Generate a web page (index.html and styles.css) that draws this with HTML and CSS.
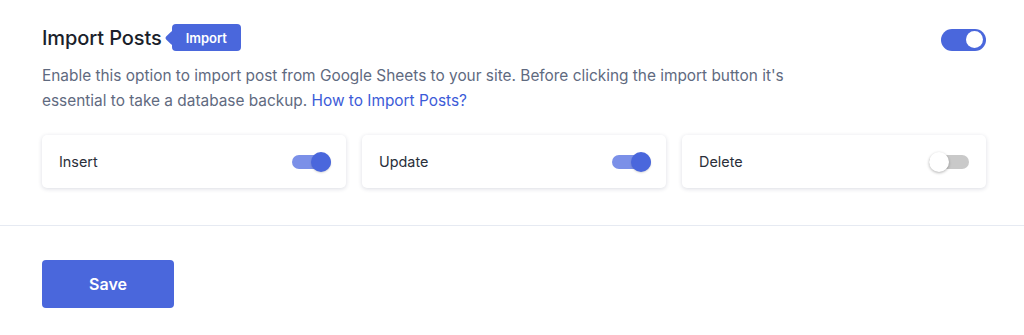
FILE: index.html
```html
<!DOCTYPE html>
<html>
<head>
<meta charset="utf-8">
<link rel="stylesheet" href="styles.css">
</head>
<body>
<div class="section">
  <div class="header">
    <div class="title-wrap">
      <h2 class="title">Import Posts</h2>
      <span class="badge">Import</span>
    </div>
    <span class="toggle-main"><span class="knob-main"></span></span>
  </div>
  <p class="desc">Enable this option to import post from Google Sheets to your site. Before clicking the import button it's<br>essential to take a database backup. <a class="link" href="#">How to Import Posts?</a></p>
  <div class="cards">
    <div class="card"><span class="label">Insert</span><span class="sw on"><span class="sw-knob"></span></span></div>
    <div class="card"><span class="label">Update</span><span class="sw on"><span class="sw-knob"></span></span></div>
    <div class="card"><span class="label">Delete</span><span class="sw off"><span class="sw-knob"></span></span></div>
  </div>
</div>
<div class="footer">
  <button class="save">Save</button>
</div>
</body>
</html>
```
FILE: styles.css
```css
* { box-sizing: border-box; }
body {
  margin: 0;
  background: #fff;
  font-family: Inter, "Noto Sans", sans-serif;
}
.section {
  padding: 24px 38px 37px 42px;
  border-bottom: 1px solid #e6eaf2;
}
.header {
  display: flex;
  align-items: center;
  justify-content: space-between;
  height: 27px;
}
.title-wrap {
  display: flex;
  align-items: center;
}
.title {
  margin: 0;
  font-size: 20px;
  font-weight: 500;
  color: #1b1f2b;
  letter-spacing: -0.1px;
}
.badge {
  position: relative;
  margin-left: 10px;
  height: 27px;
  padding: 0 14px;
  display: inline-flex;
  align-items: center;
  background: #4a67dc;
  color: #fff;
  font-size: 13px;
  font-weight: 600;
  border-radius: 4px;
}
.badge::before {
  content: "";
  position: absolute;
  left: -5px;
  top: 50%;
  width: 11px;
  height: 11px;
  background: #4a67dc;
  transform: translateY(-50%) rotate(45deg);
  border-radius: 2px;
}
.toggle-main {
  width: 45px;
  height: 22px;
  margin-top: 4px;
  border-radius: 11px;
  background: #4a67dc;
  display: flex;
  align-items: center;
  justify-content: flex-end;
  padding: 0 3px;
}
.knob-main {
  width: 17px;
  height: 17px;
  border-radius: 50%;
  background: #fff;
}
.desc {
  margin: 12px 0 0;
  font-size: 15.4px;
  line-height: 25px;
  color: #5f6a7f;
}
.link {
  color: #3c5bd8;
  text-decoration: none;
}
.cards {
  margin-top: 22px;
  display: grid;
  grid-template-columns: 1fr 1fr 1fr;
  gap: 16px;
}
.card {
  height: 53px;
  border-radius: 5px;
  background: #fff;
  box-shadow: 0 1px 4px rgba(30, 40, 80, 0.16);
  display: flex;
  align-items: center;
  justify-content: space-between;
  padding: 0 15px 0 17px;
}
.label {
  font-size: 14.4px;
  color: #2a2f3a;
}
.sw {
  position: relative;
  width: 33px;
  height: 14px;
  border-radius: 7px;
  margin-right: 6px;
}
.sw.on { background: #7b90e8; margin-right: 0; width: 39px; }
.sw.off { background: #c9c9c9; width: 40px; margin-right: 2px; }
.sw-knob {
  position: absolute;
  top: -3px;
  width: 20px;
  height: 20px;
  border-radius: 50%;
}
.sw.on .sw-knob {
  right: 0;
  background: #4a67dc;
  box-shadow: 0 1px 2px rgba(0, 0, 0, 0.15);
}
.sw.off .sw-knob {
  left: 0;
  background: #fff;
  box-shadow: 0 1px 3px rgba(0, 0, 0, 0.3);
}
.footer {
  padding: 34px 42px;
}
.save {
  width: 132px;
  height: 48px;
  border: none;
  border-radius: 4px;
  background: #4a67dc;
  color: #fff;
  font-family: Inter, "Noto Sans", sans-serif;
  font-size: 16px;
  font-weight: 600;
}
```
